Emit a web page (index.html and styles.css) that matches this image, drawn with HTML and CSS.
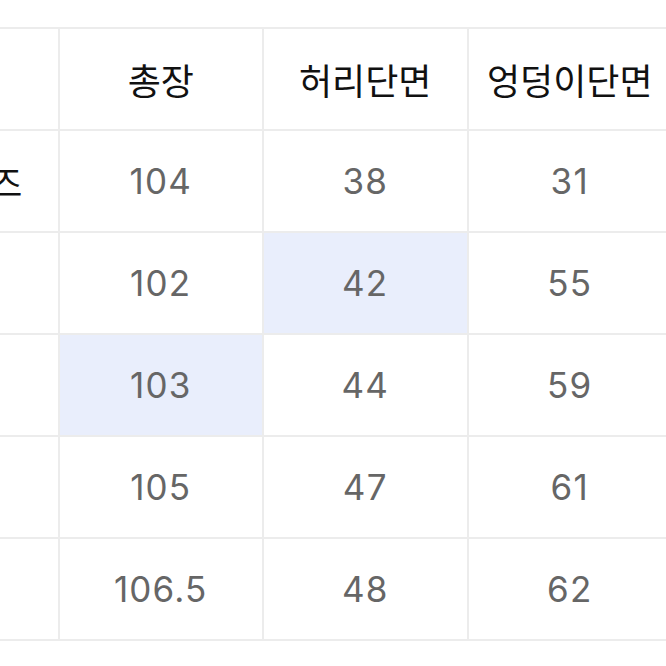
FILE: index.html
```html
<!DOCTYPE html>
<html lang="ko">
<head>
<meta charset="utf-8">
<link rel="stylesheet" href="styles.css">
</head>
<body>
<div class="page">
  <div class="size-table">
    <div class="cell head"></div>
    <div class="cell head">총장</div>
    <div class="cell head">허리단면</div>
    <div class="cell head">엉덩이단면</div>

    <div class="cell label">원사이즈</div>
    <div class="cell num">104</div>
    <div class="cell num">38</div>
    <div class="cell num">31</div>

    <div class="cell label">S</div>
    <div class="cell num">102</div>
    <div class="cell num hl">42</div>
    <div class="cell num">55</div>

    <div class="cell label">M</div>
    <div class="cell num hl">103</div>
    <div class="cell num">44</div>
    <div class="cell num">59</div>

    <div class="cell label">L</div>
    <div class="cell num">105</div>
    <div class="cell num">47</div>
    <div class="cell num">61</div>

    <div class="cell label">XL</div>
    <div class="cell num">106.5</div>
    <div class="cell num">48</div>
    <div class="cell num">62</div>
  </div>
</div>
</body>
</html>
```
FILE: styles.css
```css
html, body {
  margin: 0;
  padding: 0;
  background: #ffffff;
}
body {
  width: 666px;
  height: 666px;
  overflow: hidden;
}
.page {
  padding-top: 27px;
  width: 666px;
  overflow: hidden;
}
.size-table {
  display: inline-grid;
  grid-template-columns: repeat(4, 202.5px);
  grid-auto-rows: 100px;
  gap: 2px;
  padding: 2px;
  background: #ececec;
  margin-left: -147px;
}
.cell {
  background: #ffffff;
  display: flex;
  align-items: center;
  justify-content: center;
  white-space: nowrap;
}
.head, .label {
  font-family: "Noto Sans CJK KR", "Noto Sans", sans-serif;
  font-size: 36px;
  color: #111111;
}
.num {
  font-family: Inter, "Liberation Sans", Arial, sans-serif;
  font-size: 35px;
  letter-spacing: 1.2px;
  color: #666666;
}
.hl {
  background: #e9eefc;
}
```
